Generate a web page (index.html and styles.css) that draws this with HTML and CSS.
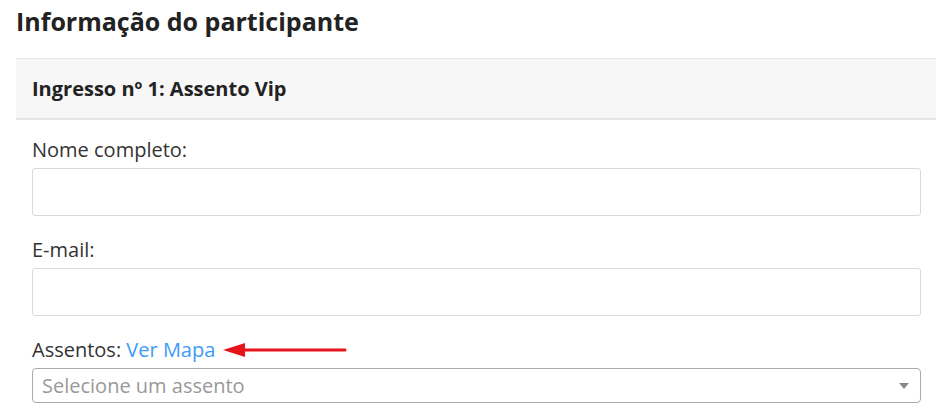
FILE: index.html
```html
<!DOCTYPE html>
<html lang="pt-BR">
<head>
<meta charset="utf-8">
<title>Informação do participante</title>
<link rel="stylesheet" href="styles.css">
</head>
<body>
<div class="page">
  <h2 class="title">Informação do participante</h2>
  <div class="panel">
    <div class="panel-heading">Ingresso nº 1: Assento Vip</div>
    <div class="panel-body">
      <div class="form-group">
        <label class="label">Nome completo:</label>
        <input class="input" type="text">
      </div>
      <div class="form-group">
        <label class="label">E-mail:</label>
        <input class="input" type="text">
      </div>
      <div class="form-group last">
        <div class="label label-row">
          <span>Assentos:&nbsp;<a class="link" href="#">Ver Mapa</a></span>
          <svg class="arrow" width="124" height="16" viewBox="0 0 124 16">
            <path d="M20 8 H122" stroke="#e8141b" stroke-width="3" stroke-linecap="round"/>
            <path d="M0 8 L22 1 L22 15 Z" fill="#e8141b"/>
          </svg>
        </div>
        <div class="select">
          <span class="placeholder">Selecione um assento</span>
          <span class="caret"></span>
        </div>
      </div>
    </div>
  </div>
</div>
</body>
</html>
```
FILE: styles.css
```css
* { box-sizing: border-box; }
html, body { margin: 0; padding: 0; background: #fff; }
body {
  font-family: "Open Sans", "Noto Sans", sans-serif;
  color: #333;
}
.page {
  padding: 4px 4px 0 16px;
}
.title {
  margin: 0 0 19px 0;
  font-size: 25px;
  line-height: 35px;
  font-weight: 700;
  color: #222;
}
.panel {
  border-top: 1px solid #e3e3e3;
}
.panel-heading {
  height: 61px;
  display: flex;
  align-items: center;
  padding: 0 16px;
  background: #f7f7f7;
  border-bottom: 2px solid #e6e6e6;
  font-size: 20px;
  font-weight: 700;
  color: #222;
}
.panel-body {
  padding: 16px 15px 0 16px;
}
.form-group {
  margin-bottom: 20px;
}
.form-group.last { margin-bottom: 0; }
.label {
  display: block;
  font-size: 20px;
  line-height: 28px;
  margin-bottom: 4px;
  color: #333;
}
.label-row {
  display: flex;
  align-items: center;
  margin-bottom: 4px;
}
.link {
  color: #3e9bf5;
  text-decoration: none;
}
.arrow {
  margin-left: 8px;
  margin-top: 0;
}
.input {
  display: block;
  width: 100%;
  height: 48px;
  border: 1px solid #d6dbe0;
  border-radius: 3px;
  background: #fff;
  margin: 0;
}
.select {
  display: flex;
  align-items: center;
  justify-content: space-between;
  height: 35px;
  border: 1px solid #aaa;
  border-radius: 4px;
  padding: 0 10px 0 9px;
}
.placeholder {
  font-size: 20px;
  color: #999;
}
.caret {
  width: 0;
  height: 0;
  border-left: 5px solid transparent;
  border-right: 5px solid transparent;
  border-top: 6px solid #888;
  margin-right: 1px;
}
```
